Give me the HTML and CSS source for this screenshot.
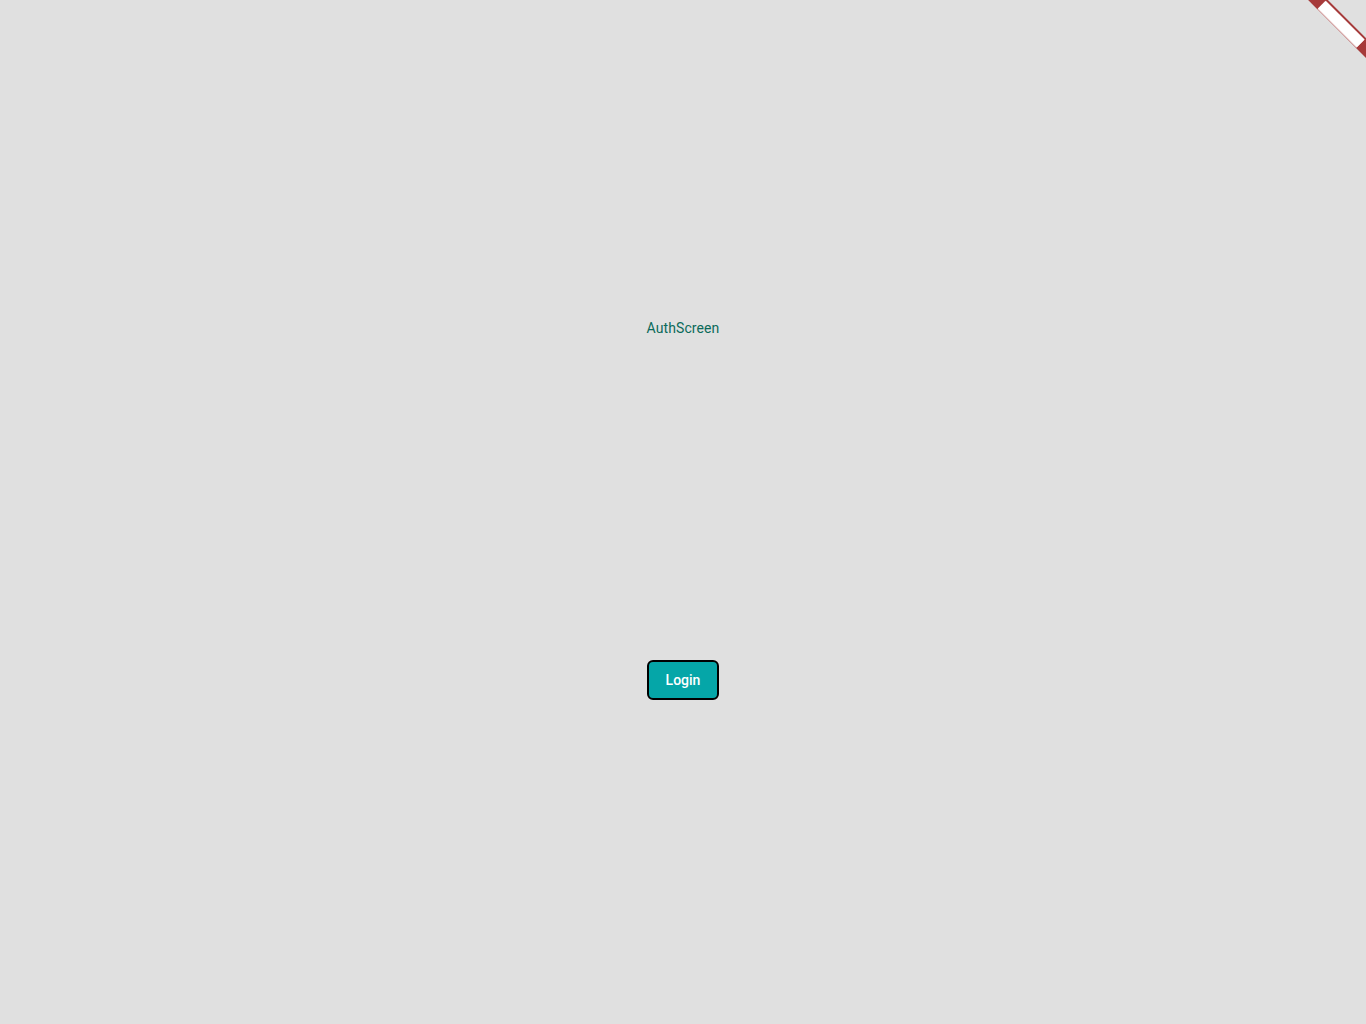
FILE: index.html
```html
<!DOCTYPE html>
<html lang="en">
<head>
<meta charset="utf-8">
<title>AuthScreen</title>
<link rel="stylesheet" href="styles.css">
</head>
<body>
<main class="screen">
  <div class="title">AuthScreen</div>
  <button class="login">Login</button>
</main>
<div class="banner"><span class="banner-inner"></span></div>
</body>
</html>
```

FILE: styles.css
```css
html, body {
  margin: 0;
  padding: 0;
  background: #e0e0e0;
  width: 1366px;
  height: 1024px;
  overflow: hidden;
  font-family: Roboto, "Noto Sans", sans-serif;
}
.screen {
  display: flex;
  flex-direction: column;
  align-items: center;
  padding-top: 320px;
  gap: 324px;
}
.title {
  font-size: 14px;
  line-height: 16px;
  color: #0b6a5a;
  letter-spacing: 0.1px;
}
.login {
  box-sizing: border-box;
  width: 72px;
  height: 40px;
  background: #05a6a8;
  border: 2px solid #000;
  border-radius: 6px;
  color: #fff;
  font-family: Roboto, "Noto Sans", sans-serif;
  font-size: 14px;
  font-weight: 500;
  padding: 0;
  display: flex;
  align-items: center;
  justify-content: center;
}
.banner {
  position: absolute;
  left: 1282px;
  top: 17px;
  width: 120px;
  height: 14px;
  background: #a63a3a;
  transform: rotate(45deg);
  transform-origin: center;
  display: flex;
  align-items: center;
}
.banner-inner {
  display: block;
  margin-left: 32px;
  width: 55px;
  height: 11px;
  background: #fff;
  box-shadow: 0 1px 0 #e2bcbc;
}
```
